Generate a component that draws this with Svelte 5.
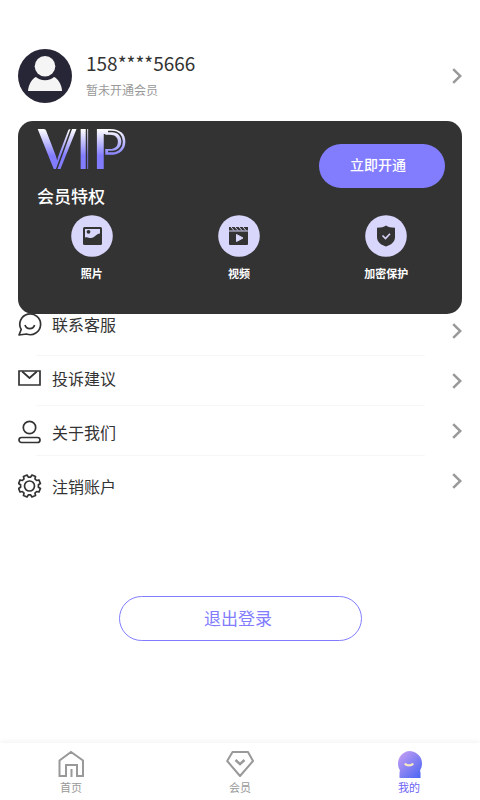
<script>
  const phone = '158****5666'

  const perks = [
    { name: '照片', icon: 'photo' },
    { name: '视频', icon: 'video' },
    { name: '加密保护', icon: 'shield' }
  ]

  const links = [
    { name: '联系客服', icon: 'chat' },
    { name: '投诉建议', icon: 'mail' },
    { name: '关于我们', icon: 'person' },
    { name: '注销账户', icon: 'gear' }
  ]

  const tabs = [
    { name: '首页', icon: 'home' },
    { name: '会员', icon: 'diamond' },
    { name: '我的', icon: 'me' }
  ]

  let active = $state('我的')

  // eight teeth, four points each
  const gear = Array.from({ length: 8 }, (_, i) =>
    [[-15, 9], [-10, 11.2], [10, 11.2], [15, 9]].map(([offset, r]) => {
      const a = ((22.5 + i * 45 + offset) * Math.PI) / 180
      return (11.5 + r * Math.cos(a)).toFixed(2) + ',' + (12 + r * Math.sin(a)).toFixed(2)
    }).join(' ')
  ).join(' ')
</script>

{#snippet chevron()}
  <svg class="chevron" viewBox="0 0 10 16" width="10" height="16">
    <path d="M1.200 1.200 8.300 8l-7.100 6.800" fill="none" stroke="#999" stroke-width="2.500" />
  </svg>
{/snippet}

<div class="page">
  <header>
    <svg class="avatar" viewBox="0 0 54 54" width="54" height="54">
      <circle cx="27" cy="27" r="27" fill="#272636" />
      <path d="M10 42c.6-7 4-12.600 8.500-14.300h17c4.500 1.700 8 7.300 8.600 14.300z" fill="#f5f5f5" />
      <circle cx="27" cy="17.300" r="14" fill="#272636" />
      <circle cx="27" cy="17.300" r="10.300" fill="#f5f5f5" />
    </svg>
    <div class="user">
      <h1>{phone}</h1>
      <p>暂未开通会员</p>
    </div>
    {@render chevron()}
  </header>

  <section class="card">
    <div class="top">
      <div>
        <svg class="vip" viewBox="0 0 100 44" width="100" height="44">
          <defs>
            <linearGradient id="vip-fill" gradientUnits="userSpaceOnUse" x1="0" y1="0" x2="0" y2="44">
              <stop offset="0.050" stop-color="#fff" />
              <stop offset="0.650" stop-color="#827dfe" />
            </linearGradient>
          </defs>
          <text x="1" y="42" fill="url(#vip-fill)">VIP</text>
          <g fill="none" stroke="#333" stroke-width="1.500">
            <path d="M35 0 19 44M49.500 0v44M67.500 7v37" />
            <path d="M71 4.500h4c13.500 0 13.500 20 0 20h-4" />
          </g>
        </svg>
        <h2>会员特权</h2>
      </div>
      <button class="open">立即开通</button>
    </div>
    <ul class="perks">
      {#each perks as { name, icon }}
        <li>
          <svg viewBox="0 0 42 42" width="42" height="42">
            <circle cx="21" cy="21" r="20.800" fill="#d9d6fb" />
            {#if icon === 'photo'}
              <rect x="12" y="12" width="19" height="18" rx="1.500" fill="#333" />
              <path d="M14 14h15v4.500c-4 0-5 4.500-9 4.500-2.500 0-3-1.500-6-.5z" fill="#d9d6fb" />
              <circle cx="17.500" cy="16.800" r="1.900" fill="#333" />
            {:else if icon === 'video'}
              <path d="M11 12h19v3.500H11zM11 16.500h19V29a1 1 0 0 1-1 1H12a1 1 0 0 1-1-1z" fill="#333" />
              <path d="m13 12 3 3.500m1-3.500 3 3.500m1-3.500 3 3.500m1-3.500 3 3.500" stroke="#d9d6fb" />
              <path d="M18.500 19.500v7l6.500-3.500z" fill="#d9d6fb" stroke="#d9d6fb" stroke-linejoin="round" />
            {:else}
              <path d="M21 10.500c2 1.500 5 2.200 9 2.300V22c0 5-4 8-9 9.500-5-1.500-9-4.500-9-9.500v-9.200c4-.1 7-.8 9-2.300z" fill="#333" />
              <path d="m17.500 20.500 3 3 4.500-4.800" fill="none" stroke="#d9d6fb" stroke-width="1.600" />
            {/if}
          </svg>
          <span>{name}</span>
        </li>
      {/each}
    </ul>
  </section>

  <nav class="menu">
    <div class="arrows">
      {#each links as link}
        <div class="arrow">{@render chevron()}</div>
      {/each}
    </div>
    <div class="links">
      {#each links as { name, icon }}
        <a href="#{icon}">
          <svg viewBox="0 0 24 24" width="24" height="24" fill="none" stroke="#333" stroke-width="1.700" stroke-linejoin="round">
            {#if icon === 'chat'}
              <path d="M3.200 17.500A10.400 10.400 0 1 1 8.500 22L1 23z" />
              <path d="M7 13a5 5 0 0 0 9.600 0" />
            {:else if icon === 'mail'}
              <path d="M1 5h21v14H1z" stroke-linejoin="miter" />
              <path d="m4.200 5.500 7.300 6.500 7.300-6.500" />
            {:else if icon === 'person'}
              <circle cx="11.500" cy="7.500" r="6.200" />
              <rect x="1" y="17.500" width="21" height="5" rx="2.500" />
            {:else}
              <circle cx="11.500" cy="12" r="5" />
              <polygon points={gear} />
            {/if}
          </svg>
          {name}
        </a>
      {/each}
    </div>
  </nav>

  <button class="logout">退出登录</button>

  <nav class="tabs">
    {#each tabs as { name, icon }}
      <button class:active={active === name} onclick={() => (active = name)}>
        <svg viewBox="0 0 28 28" width="28" height="28" fill="none" stroke="#999" stroke-width="2">
          {#if icon === 'home'}
            <path d="M2.500 26V10.500L14 2l12 8.500V26h-6V15H9v11z" />
            <path d="M14.500 19v8" />
          {:else if icon === 'diamond'}
            <path d="M6.500 2h15.500l5 9-13 15L1.200 11z" stroke-linejoin="round" />
            <path d="m9.500 10 4.500 4.200 4.500-4.200" stroke-width="2.400" />
          {:else}
            <defs>
              <linearGradient id="me-fill" x1="0" y1="0" x2="0.900" y2="1">
                <stop offset="0" stop-color="#cba2f4" />
                <stop offset="1" stop-color="#4d67f2" />
              </linearGradient>
            </defs>
            <path d="M14.500 1a12.500 12.500 0 0 1 11 18.500c-.8 1.300 0 2 0 3.500v5h-21v-5c0-1.500.8-2.200 0-3.500A12.500 12.500 0 0 1 14.500 1z" fill="url(#me-fill)" stroke="none" />
            <path d="M9.800 13.500c2 2.600 6.400 2.600 8.400 0" stroke="#f5e6c4" stroke-width="2.200" />
          {/if}
        </svg>
        <span>{name}</span>
      </button>
    {/each}
  </nav>
</div>

<style>
  :global(body) {
    background: #fff;
    color: #333;
    font-family: 'Noto Sans CJK SC', sans-serif;
  }
  .page {
    display: flex;
    flex-direction: column;
    min-height: 100vh;
  }
  h1,
  h2,
  p,
  ul {
    margin: 0;
    padding: 0;
  }
  svg {
    display: block;
    flex: none;
  }
  button {
    font-family: inherit;
    cursor: pointer;
  }
  header {
    display: flex;
    align-items: center;
    padding: 49px 18px 0;
  }
  .user {
    flex: 1;
    margin-left: 14px;
  }
  h1 {
    font-size: 19px;
    line-height: 28px;
    font-weight: 400;
  }
  .user p {
    font-size: 12px;
    line-height: 26px;
    color: #999;
  }
  .card {
    margin: 18px 18px 0;
    padding-bottom: 33px;
    border-radius: 15px;
    background: #333;
    color: #fff;
  }
  .top {
    display: flex;
    justify-content: space-between;
    padding: 6px 17px 0 19px;
  }
  .vip {
    overflow: visible;
  }
  .vip text {
    font-family: Lato, sans-serif;
    font-size: 55px;
    font-weight: 700;
  }
  h2 {
    margin-top: 12px;
    font-size: 17px;
    line-height: 26px;
    font-weight: 500;
  }
  .open {
    width: 126px;
    height: 44px;
    margin-top: 17px;
    padding: 0 8px 4px 0;
    border: 0;
    border-radius: 22px;
    background: #827dfe;
    color: #fff;
    font-size: 14px;
    font-weight: 500;
  }
  .perks {
    display: grid;
    grid-template-columns: repeat(3, 1fr);
    margin-top: 6px;
    padding-right: 2px;
    list-style: none;
  }
  .perks li {
    display: flex;
    flex-direction: column;
    align-items: center;
    font-size: 11px;
    line-height: 16px;
    font-weight: 700;
  }
  .perks span {
    margin-top: 8px;
  }
  /* labels and arrows keep their own row heights, so they share one cell */
  .menu {
    display: grid;
    margin: -8px 18px 0;
  }
  .arrows,
  .links {
    grid-area: 1 / 1;
  }
  .arrow {
    display: flex;
    align-items: center;
    justify-content: flex-end;
    height: 50px;
    background: linear-gradient(#f7f7f7, #f7f7f7) no-repeat 18px 100%;
    background-size: calc(100% - 55px) 1px;
  }
  .arrow:last-child {
    background: none;
  }
  .links {
    margin-top: -9px;
    justify-self: start;
  }
  .links a {
    display: flex;
    align-items: center;
    gap: 10px;
    height: 54px;
    color: #333;
    font-size: 16px;
    text-decoration: none;
  }
  .logout {
    align-self: center;
    width: 243px;
    height: 45px;
    margin: 83px 0 24px;
    padding: 0 4px 2px 0;
    border: 1px solid #827dfe;
    border-radius: 23px;
    background: #fff;
    color: #827dfe;
    font-size: 17px;
  }
  .tabs {
    display: flex;
    justify-content: space-between;
    margin-top: auto;
    padding: 7px 57px 4px;
    box-shadow: 0 -1px 6px rgba(0, 0, 0, 0.06);
  }
  .tabs button {
    display: flex;
    flex-direction: column;
    align-items: center;
    width: 28px;
    padding: 0;
    border: 0;
    background: none;
    color: #999;
    font-size: 11px;
    line-height: 18px;
    white-space: nowrap;
  }
  .tabs .active {
    color: #6c63f5;
  }
</style>
